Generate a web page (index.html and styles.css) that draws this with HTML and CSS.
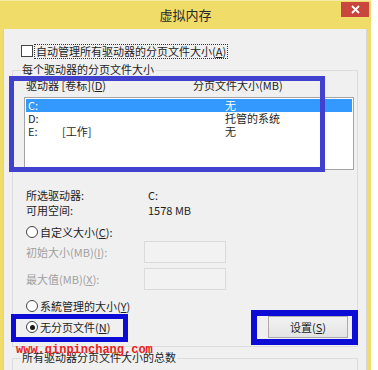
FILE: index.html
```html
<!DOCTYPE html>
<html>
<head>
  <meta charset="utf-8">
  <title>虚拟内存</title>
  <link rel="stylesheet" href="styles.css">
</head>
<body>

  <div class="window">
    <div class="titlebar">
      <h1 class="title">虚拟内存</h1>
      <button class="close-btn">
        <svg width="9" height="9" viewBox="0 0 9 9"><path d="M1 1 L8 8 M8 1 L1 8" stroke="#fff" stroke-width="1.8"/></svg>
      </button>
    </div>

    <div class="content">
      <div class="check-row">
        <span class="checkbox"></span>
        <span class="focus-label">自动管理所有驱动器的分页文件大小(<u>A</u>)</span>
      </div>

      <section class="group group-drives">
        <div class="group-title">每个驱动器的分页文件大小</div>

        <div class="list-head">
          <span>驱动器 [卷标](<u>D</u>)</span>
          <span>分页文件大小(MB)</span>
        </div>

        <div class="listbox">
          <div class="list-row selected"><span>C:</span><span></span><span>无</span></div>
          <div class="list-row"><span>D:</span><span></span><span>托管的系统</span></div>
          <div class="list-row"><span>E:</span><span>[工作]</span><span>无</span></div>
        </div>

        <div class="info">
          <div class="info-row"><span class="info-label">所选驱动器:</span><span>C:</span></div>
          <div class="info-row"><span class="info-label">可用空间:</span><span>1578 MB</span></div>
        </div>

        <div class="radio-row row-custom"><span class="radio"></span>自定义大小(<u>C</u>):</div>

        <div class="field-row row-initial">
          <span class="field-label">初始大小(MB)(<u>I</u>):</span>
          <span class="textbox"></span>
        </div>
        <div class="field-row row-max">
          <span class="field-label">最大值(MB)(<u>X</u>):</span>
          <span class="textbox"></span>
        </div>

        <div class="radio-row row-system"><span class="radio"></span>系統管理的大小(<u>Y</u>)</div>

        <div class="action-row">
          <div class="radio-row"><span class="radio checked"></span>无分页文件(<u>N</u>)</div>
          <button class="set-btn">设置(<u>S</u>)</button>
        </div>
      </section>

      <section class="group group-total">
        <div class="group-title">所有驱动器分页文件大小的总数</div>
      </section>
    </div>

    <!-- annotation boxes drawn over the dialog -->
    <div class="mark mark-list"></div>
    <div class="mark mark-radio"></div>
    <div class="mark mark-button"></div>
    <div class="watermark">www.qinpinchang.com</div>
  </div>

</body>
</html>
```

FILE: styles.css
```css
body {
  margin: 0;
  background: #ffffff;
  color: #1e1e1e;
  font-family: "Noto Sans CJK SC", "Noto Sans", sans-serif;
  font-size: 11px;
}

u {
  text-underline-offset: 1px;
}

.window {
  position: relative;
  width: 371px;
  height: 370px;
  background: #efdc69;
  border-top: 1px solid #f4eaa6;
  box-sizing: border-box;
  display: flex;
  flex-direction: column;
  overflow: hidden;
}

/* title bar */
.titlebar {
  flex: none;
  height: 28px;
  display: grid;
  grid-template-columns: 1fr auto 1fr;
}

.title {
  grid-column: 2;
  margin: 0;
  font-size: 13px;
  font-weight: normal;
  line-height: 28px;
  color: #2a2a2a;
}

.close-btn {
  grid-column: 3;
  justify-self: end;
  align-self: start;
  width: 28px;
  height: 15px;
  margin: 1px 2px 0 0;
  padding: 0;
  border: 0;
  background: #c8463d;
  display: flex;
  align-items: center;
  justify-content: center;
}

/* dialog body */
.content {
  flex: 1;
  margin: 0 4px 0 3px;
  background: #f0f0f0;
  border-left: 1px solid #cfcfcf;
  border-right: 1px solid #d7d7d7;
}

.check-row {
  display: flex;
  align-items: center;
  height: 16px;
  margin-top: 14px;
  padding-left: 17px;
}

.checkbox {
  width: 10px;
  height: 10px;
  border: 1px solid #444;
  background: #fff;
}

.focus-label {
  margin-left: 1px;
  padding: 0 1px;
  border: 1px dotted #333;
  line-height: 13px;
}

.group {
  border: 1px solid #dcdcdc;
  margin: 11px 8px 0 8px;
}

.group-title {
  display: table;
  margin: -9px 0 0 8px;
  padding: 0 1px;
  background: #f0f0f0;
  line-height: 14px;
}

.group-drives {
  padding-bottom: 8px;
}

.group-total {
  height: 40px;
}

.list-head {
  display: grid;
  grid-template-columns: 167px 1fr;
  margin-top: 2px;
  padding-left: 13px;
  line-height: 14px;
}

.listbox {
  height: 73px;
  box-sizing: border-box;
  margin: 5px 3px 0 11px;
  padding: 1px;
  border: 1px solid #a3a3a3;
  background: #ffffff;
}

.list-row {
  display: grid;
  grid-template-columns: 34px 163px 1fr;
  height: 13px;
  padding-left: 2px;
  line-height: 13px;
}

.list-row.selected {
  background: #3399ff;
  color: #ffffff;
}

.info {
  margin-top: 18px;
  padding-left: 13px;
  line-height: 15px;
}

.info-row {
  display: flex;
}

.info-label {
  width: 122px;
}

.radio-row {
  display: flex;
  align-items: center;
  height: 14px;
  padding-left: 13px;
  line-height: 14px;
}

.row-custom {
  margin-top: 7px;
}

.row-system {
  margin-top: 9px;
}

.radio {
  width: 10px;
  height: 10px;
  margin-right: 2px;
  border: 1px solid #444;
  border-radius: 50%;
  background: #fff;
  display: flex;
  align-items: center;
  justify-content: center;
}

.radio.checked::after {
  content: "";
  width: 5px;
  height: 5px;
  border-radius: 50%;
  background: #1a1a1a;
}

.field-row {
  display: flex;
  align-items: center;
  height: 22px;
  padding-left: 13px;
  color: #a0a0a0;
}

.row-initial {
  margin-top: 2px;
}

.row-max {
  margin-top: 5px;
}

.field-label {
  width: 118px;
}

.textbox {
  width: 80px;
  height: 20px;
  border: 1px solid #dadada;
  background: #f2f2f2;
}

.action-row {
  display: flex;
  align-items: center;
  justify-content: space-between;
  height: 22px;
  margin-top: 3px;
}

.set-btn {
  width: 80px;
  height: 22px;
  margin-right: 9px;
  padding: 0;
  border: 1px solid #acacac;
  background: linear-gradient(to bottom, #f2f2f2, #e4e4e4);
  color: #1e1e1e;
  font-family: inherit;
  font-size: 11px;
}

/* annotations */
.mark {
  position: absolute;
  box-sizing: border-box;
  border: 5px solid #0c0cd6;
}

.mark-list {
  left: 9px;
  top: 75px;
  width: 316px;
  height: 96px;
  border-color: #4042cf;
}

.mark-radio {
  left: 11px;
  top: 313px;
  width: 117px;
  height: 28px;
}

.mark-button {
  left: 251px;
  top: 309px;
  width: 107px;
  height: 35px;
  border-width: 6px;
}

.watermark {
  position: absolute;
  left: 16px;
  top: 342px;
  font-family: "Liberation Mono", monospace;
  font-size: 12px;
  font-weight: bold;
  line-height: 14px;
  color: #e8211b;
}
```
